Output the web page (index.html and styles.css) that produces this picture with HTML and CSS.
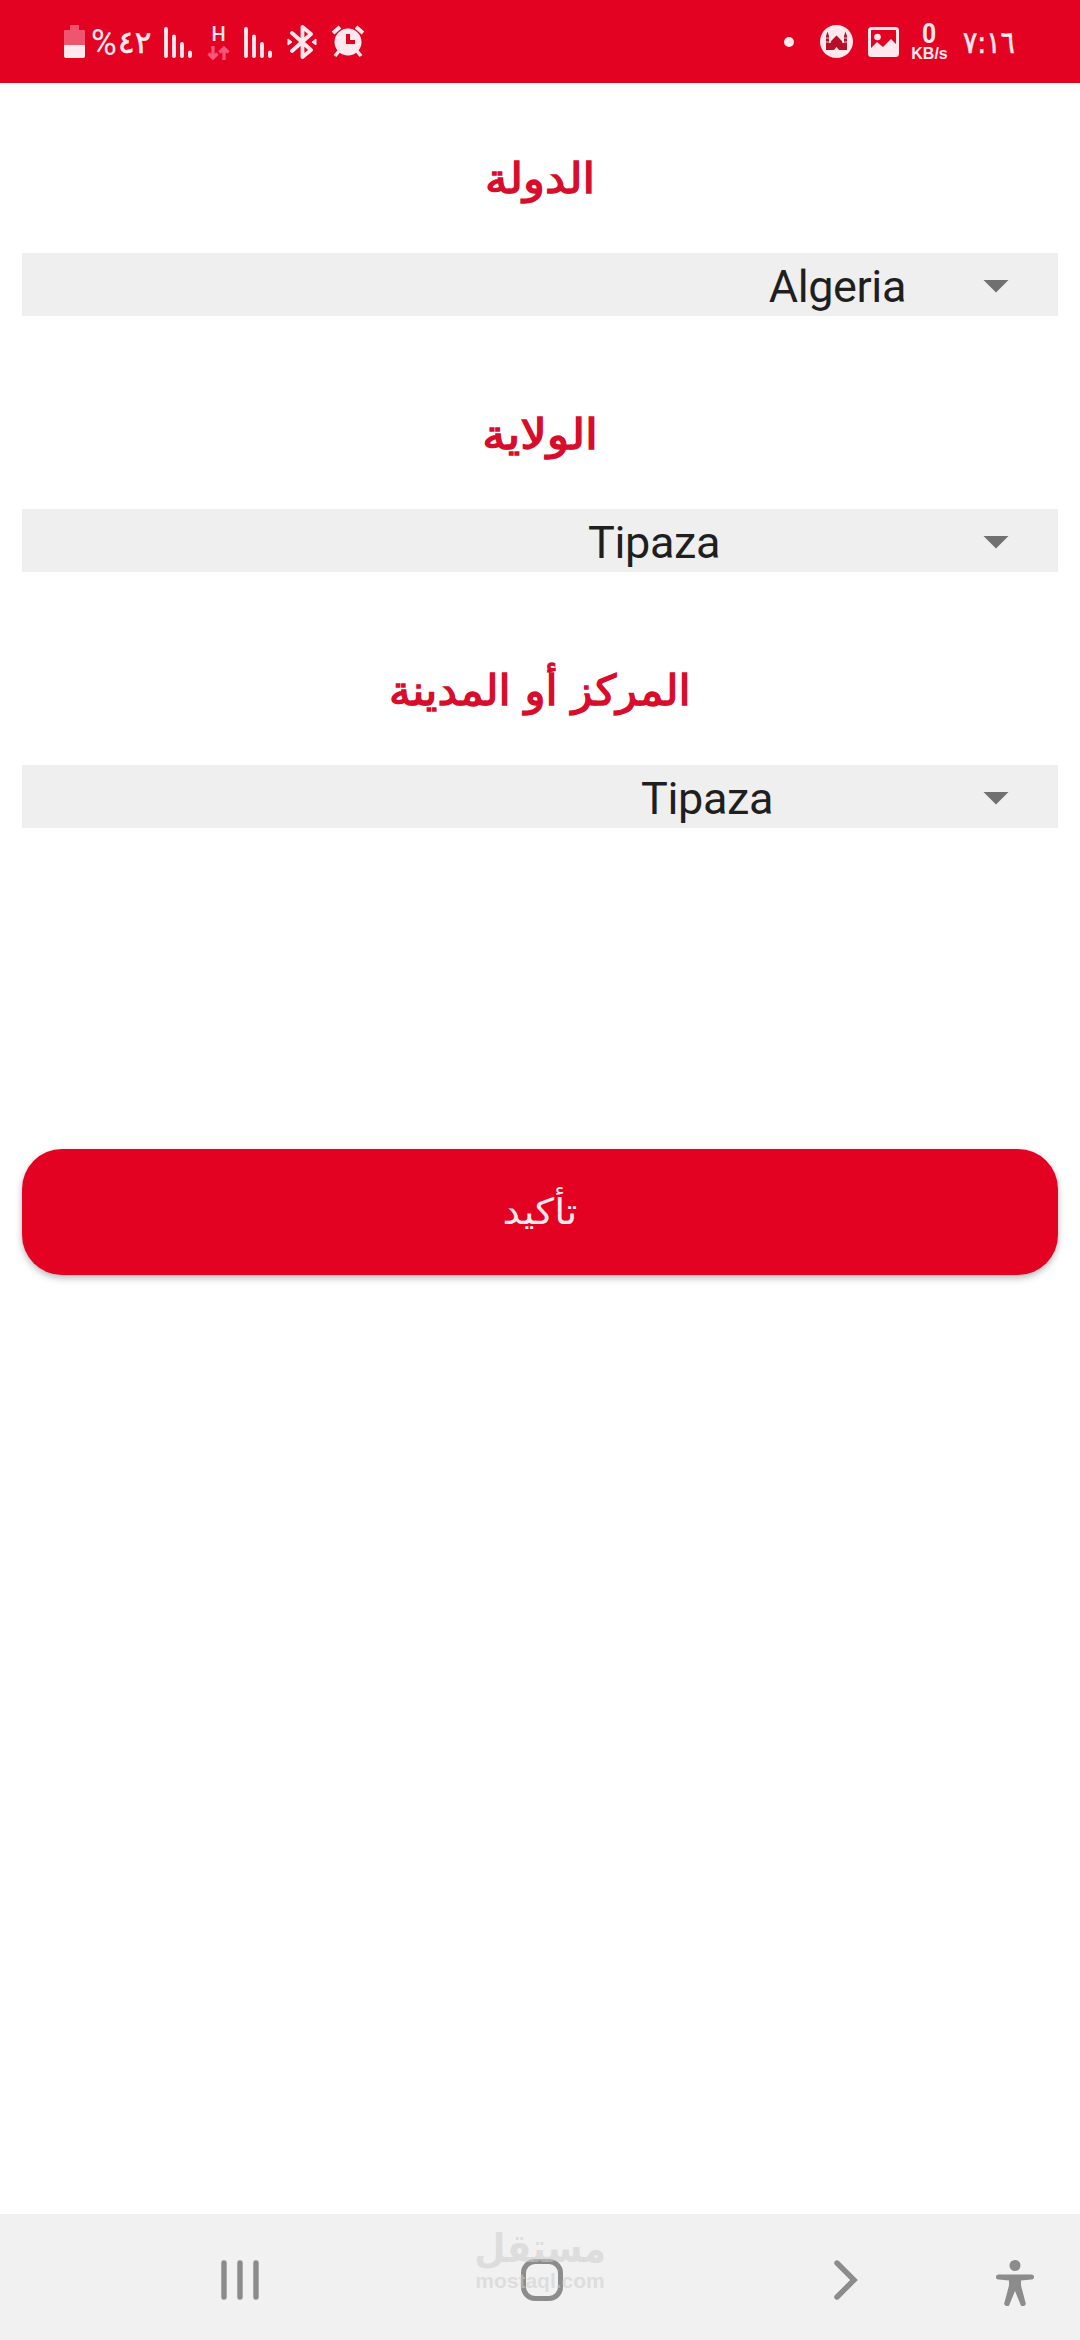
FILE: index.html
```html
<!DOCTYPE html>
<html lang="ar">
<head>
<meta charset="utf-8">
<title>الدولة</title>
<link rel="stylesheet" href="styles.css">
</head>
<body>
<div class="screen">
  <header class="status">
    <div class="status-group">
      <svg class="battery" width="21" height="33" viewBox="0 0 21 33"><path d="M6 0h9v5h5q1 0 1 1v14H0V6q0-1 1-1h5z" fill="#f0556f"/><path d="M0 20h21v11q0 2-2 2H2q-2 0-2-2z" fill="#ffe9ed"/></svg>
      <span class="percent"><span class="pct-sign">%</span><span class="pct-num">٤٢</span></span>
      <svg class="signal" width="29" height="31" viewBox="0 0 29 31"><path d="M2 2v27M10 9.500v19.500M18 17v12M26 25.500v3.500" stroke="#ffe9ed" stroke-width="3.900" stroke-linecap="round"/></svg>
      <div class="network"><span class="network-h">H</span>
        <svg width="23" height="14" viewBox="0 0 23 14"><path d="M6 0v12M1.500 7.500L6 12l4.500-4.500M17 14V2M12.500 6.500L17 2l4.500 4.500" fill="none" stroke="#f9547a" stroke-width="3.300"/></svg></div>
      <svg class="signal" width="29" height="31" viewBox="0 0 29 31"><path d="M2 2v27M10 9.500v19.500M18 17v12M26 25.500v3.500" stroke="#ffe9ed" stroke-width="3.900" stroke-linecap="round"/></svg>
      <svg class="bluetooth" width="30" height="34" viewBox="0 0 30 34"><path d="M5 8l19 17-8.500 7V2L24 9 5 26" fill="none" stroke="#ffe9ed" stroke-width="3.800" stroke-linejoin="round" stroke-linecap="round"/><path d="M1 14l4 3-4 3zM29 14l-4 3 4 3z" fill="#ffe9ed" stroke="#ffe9ed" stroke-linejoin="round"/></svg>
      <svg class="alarm" width="34" height="33" viewBox="0 0 34 33"><path d="M2 8l7-6M32 8l-7-6" stroke="#ffe9ed" stroke-width="4"/><path d="M8 26l-4 5M26 26l4 5" stroke="#ffe9ed" stroke-width="3.500"/><circle cx="17" cy="17" r="13.500" fill="#ffe9ed"/><path d="M17 9v8h7" fill="none" stroke="#e40222" stroke-width="4"/></svg>
    </div>
    <div class="status-group">
      <span class="dot"></span>
      <svg class="mosque" width="33" height="33" viewBox="0 0 33 33"><circle cx="16.500" cy="16.500" r="16.500" fill="#ffe9ed"/><path d="M6 25V11l1.500-4.500L9 11v7h1.500q.5-2.500 3-4.500l3-3 3 3q2.500 2 3 4.500H24v-7l1.500-4.500L27 11v14h-8l-2.500-3-2.500 3z" fill="#b5102a"/><path d="M6 13h3M24 13h3M6 17h3M24 17h3" stroke="#ffe9ed" stroke-width=".8"/></svg>
      <svg class="picture" width="31" height="30" viewBox="0 0 31 30"><rect x="1.500" y="1.500" width="28" height="27" rx="2" fill="none" stroke="#ffe9ed" stroke-width="3"/><circle cx="9.500" cy="10" r="3.300" fill="#ffe9ed"/><path d="M2 22l7-7 6 5 8-8 7 7v9H2z" fill="#ffe9ed"/></svg>
      <div class="speed"><span class="speed-num">0</span><span class="speed-unit">KB/s</span></div>
      <span class="clock">٧:١٦</span>
    </div>
  </header>

  <main class="form">
    <h2 class="label"><span class="fit fit-country">الدولة</span></h2>
    <div class="select select-country"><span>Algeria</span><i class="arrow"></i></div>
    <h2 class="label"><span class="fit fit-state">الولاية</span></h2>
    <div class="select select-state"><span>Tipaza</span><i class="arrow"></i></div>
    <h2 class="label"><span class="fit fit-city">المركز أو المدينة</span></h2>
    <div class="select select-city"><span>Tipaza</span><i class="arrow"></i></div>
    <button class="confirm"><span class="fit fit-confirm">تأكيد</span></button>
  </main>

  <nav class="navbar">
    <svg class="recents" width="38" height="40" viewBox="0 0 38 40"><path d="M3 3v34M19 3v34M35 3v34" stroke="#8c8c8c" stroke-width="5.400" stroke-linecap="round"/></svg>
    <svg class="home" width="42" height="42" viewBox="0 0 42 42"><rect x="2.500" y="2.500" width="37" height="37" rx="11.500" fill="none" stroke="#8c8c8c" stroke-width="5"/></svg>
    <svg class="back" width="24" height="40" viewBox="0 0 24 40"><path d="M3 3l17 17L3 37" fill="none" stroke="#8c8c8c" stroke-width="5.400" stroke-linecap="round"/></svg>
    <svg class="person" width="38" height="46" viewBox="0 0 38 46"><circle cx="19" cy="5.500" r="5.500" fill="#8c8c8c"/><path d="M2.500 14.500h33a2.500 2.500 0 0 1 0 5L25 20.500v5l4.500 17a2.500 2.500 0 0 1-5 2L19 31l-5.500 13.500a2.500 2.500 0 0 1-5-2l4.500-17v-5L2.500 19.500a2.500 2.500 0 0 1 0-5z" fill="#8c8c8c"/></svg>
    <div class="watermark"><span class="wm-ar">مستقل</span><span class="wm-en">mostaql.com</span></div>
  </nav>
</div>
</body>
</html>
```
FILE: styles.css
```css
* { box-sizing: border-box; }
body { margin: 0; background: #fff; }
svg { display: block; flex: none; }
.screen { width: 1080px; height: 2340px; display: flex; flex-direction: column; background: #fff; font-family: Roboto, "DejaVu Sans", sans-serif; }

.status { height: 83px; background: #e40222; color: #ffe9ed; display: flex; justify-content: space-between; padding: 0 66px 0 64px; }
.status-group { display: flex; align-items: center; height: 83px; }
.percent { display: flex; align-items: center; width: 59px; margin-left: 6px; }
.pct-sign { font-size: 37px; line-height: 40px; width: 27px; margin-top: 3px; transform: scaleX(.95); transform-origin: left; }
.pct-num { font-family: "DejaVu Sans", sans-serif; font-size: 31px; line-height: 40px; -webkit-text-stroke: .6px #ffe9ed; }
.signal { margin: 2px 0 0 14px; }
.network { width: 23px; margin-left: 14px; display: flex; flex-direction: column; align-items: center; gap: 4px; padding-top: 4px; }
.network-h { font-weight: 500; font-size: 20px; line-height: 15px; }
.bluetooth { margin-left: 14px; }
.alarm { margin-left: 14px; }
.dot { width: 10px; height: 10px; border-radius: 50%; background: #ffe9ed; }
.mosque { margin-left: 26px; }
.picture { margin-left: 15px; }
.speed { width: 37px; margin-left: 12px; display: flex; flex-direction: column; align-items: center; }
.speed-num { font: 700 28px/24px Roboto, sans-serif; transform: scaleX(.88); }
.speed-unit { font: 700 16px/16px "Liberation Sans", sans-serif; }
.clock { width: 51px; margin-left: 15px; font-family: "DejaVu Sans", sans-serif; font-size: 31px; line-height: 40px; white-space: nowrap; direction: ltr; transform: scaleX(.86); transform-origin: left; -webkit-text-stroke: .6px #ffe9ed; }

.form { flex: 1; padding: 0 22px; display: flex; flex-direction: column; align-items: stretch; }
.label { margin: 0; height: 170px; display: flex; justify-content: center; padding-top: 71px; font: 400 42px/50px "DejaVu Sans", sans-serif; color: #d80c2b; -webkit-text-stroke: 1.400px #d80c2b; }
.select + .label { height: 193px; padding-top: 94px; }
.fit { display: block; white-space: nowrap; direction: rtl; }
.fit-country { transform: scaleX(1.08); }
.fit-state { transform: scaleX(1.11); }
.fit-city { transform: scaleX(1.035); }
.select { height: 63px; background: #efefef; color: #1f1f1f; display: flex; align-items: center; justify-content: flex-end; padding-right: 49px; font-size: 45px; letter-spacing: -.4px; line-height: 63px; }
.select span { margin-top: 3px; }
.arrow { width: 26px; height: 13px; background: #707070; clip-path: polygon(0 0, 100% 0, 50% 100%); margin-top: 3px; }
.select-country .arrow { margin-left: 77px; }
.select-state .arrow { margin-left: 263px; }
.select-city .arrow { margin-left: 210px; }
.confirm { margin-top: 321px; height: 126px; border: 0; border-radius: 40px; background: #e40222; color: #ffe9ed; display: flex; align-items: center; justify-content: center; font: 400 36px/50px "DejaVu Sans", sans-serif; box-shadow: 0 3px 7px rgba(0,0,0,.28); }
.fit-confirm { transform: scaleX(1.1); }

.navbar { position: relative; height: 126px; background: #f1f1f1; display: flex; align-items: flex-start; padding: 45px 46px 0 221px; }
.recents { margin-top: 1px; }
.home { margin-left: 262px; }
.back { margin: 1px 0 0 271px; }
.person { margin: 1px 0 0 auto; }
.watermark { position: absolute; left: 475px; top: 14px; width: 130px; color: rgba(205,205,205,.55); display: flex; flex-direction: column; align-items: center; }
.wm-ar { font: 700 40px/41px "DejaVu Sans", sans-serif; transform: scaleX(.9); }
.wm-en { font: 700 21px/24px "Liberation Sans", sans-serif; }
```
